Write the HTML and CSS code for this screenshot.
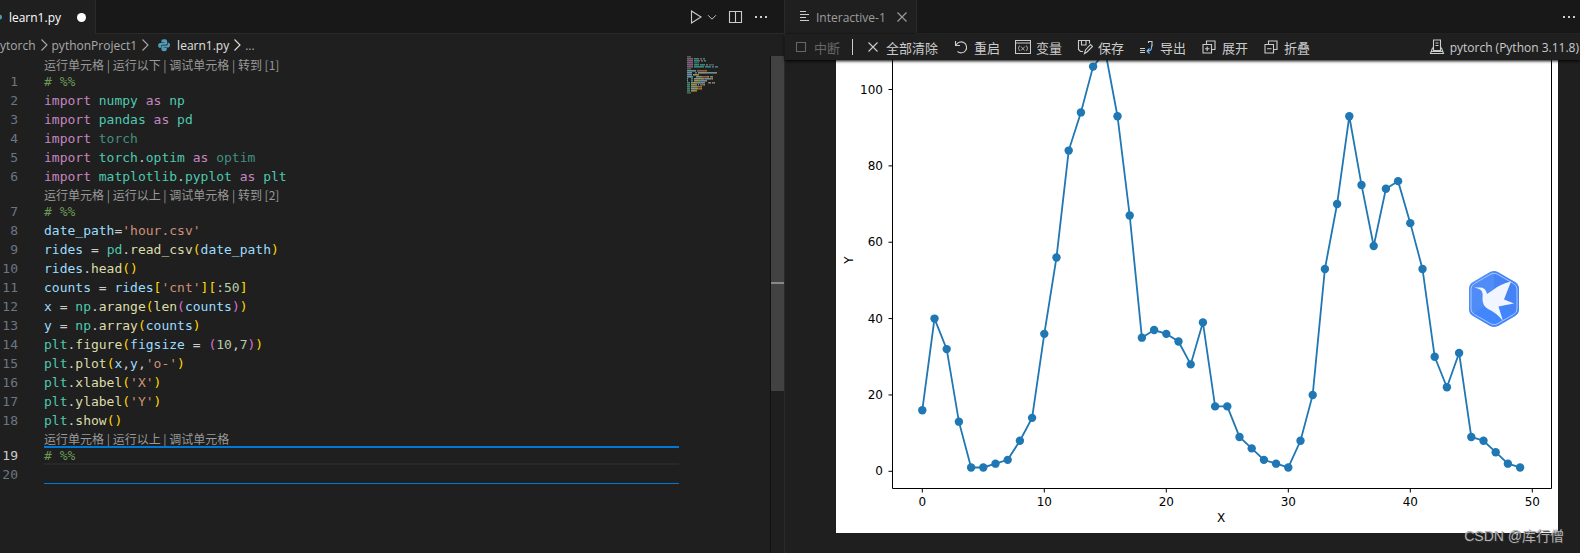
FILE: index.html
```html
<!DOCTYPE html>
<html lang="zh-CN">
<head>
    <meta charset="UTF-8">
    <meta name="viewport" content="width=device-width, initial-scale=1.0">
    <title>learn1.py</title>
    <link rel="stylesheet" href="styles.css">
</head>
<body>
    <svg class="defs" aria-hidden="true">
        <symbol id="python" viewBox="0 0 16 16">
            <path d="M8 1.5c-2.6 0-3 1-3 2.2V5h3.4v.7H3.4C2 5.700 1.300 7 1.300 8.500S2 11.200 3.300 11.200H4.600V9.500C4.600 8.300 5.600 7.600 6.600 7.600H10C11 7.600 11.600 6.800 11.600 6V3.700C11.600 2.200 10.200 1.500 8 1.500z"/>
            <path d="M8.200 15c2.600 0 3-1 3-2.200v-1.300H7.800v-.7h5c1.400 0 2-1.200 2-2.700S14.200 5.300 12.900 5.300H12.200V6.800C12.200 8 11.200 8.500 10.200 8.500H6.600C5.600 8.500 5 9.300 5 10.200v2.600c0 1.500 1.200 2.200 3.200 2.200z"/>
        </symbol>
        <symbol id="chevron" viewBox="0 0 16 16">
            <path d="M5.500 2.500L11 8L5.500 13.500"/>
        </symbol>
        <symbol id="more" viewBox="0 0 16 16">
            <path d="M2 7h2v2H2zM7 7h2v2H7zM12 7h2v2h-2z" fill="currentColor" stroke="none"/>
        </symbol>
        <symbol id="close" viewBox="0 0 16 16">
            <path d="M3.500 3.500l9 9M12.500 3.500l-9 9"/>
        </symbol>
    </svg>

    <main class="workbench">
        <section class="group">
            <div class="tabs">
                <div class="tab tab-file">
                    <svg class="icon py"><use href="#python"/></svg>
                    <span>learn1.py</span>
                    <span class="dirty"></span>
                </div>
                <div class="actions">
                    <button class="icon-btn run" aria-label="运行">
                        <svg class="icon" viewBox="0 0 16 16"><path d="M3.500 2L13 8L3.500 14z"/></svg>
                    </button>
                    <button class="icon-btn drop" aria-label="运行选项">
                        <svg class="icon" viewBox="0 0 16 16"><path d="M3.500 6L8 10.500L12.500 6"/></svg>
                    </button>
                    <button class="icon-btn split" aria-label="拆分">
                        <svg class="icon" viewBox="0 0 16 16"><path d="M1.500 2.500h12v11H1.500zM7.500 2.500v11"/></svg>
                    </button>
                    <button class="icon-btn" aria-label="更多">
                        <svg class="icon"><use href="#more"/></svg>
                    </button>
                </div>
            </div>
            <nav class="breadcrumbs">
                <a href="#">ytorch</a>
                <svg class="icon sep"><use href="#chevron"/></svg>
                <a href="#">pythonProject1</a>
                <svg class="icon sep"><use href="#chevron"/></svg>
                <svg class="icon py"><use href="#python"/></svg>
                <a href="#" class="active">learn1.py</a>
                <svg class="icon sep active"><use href="#chevron"/></svg>
                <a href="#">...</a>
            </nav>
            <div class="editor">
                <div class="code">
                    <div class="lens"><a href="#">运行单元格</a> | <a href="#">运行以下</a> | <a href="#">调试单元格</a> | <a href="#">转到 [1]</a></div>
                    <div class="line"><span class="num">1</span><code><i class="c"># %%</i></code></div>
                    <div class="line"><span class="num">2</span><code><i class="k">import</i> <i class="m">numpy</i> <i class="k">as</i> <i class="m">np</i></code></div>
                    <div class="line"><span class="num">3</span><code><i class="k">import</i> <i class="m">pandas</i> <i class="k">as</i> <i class="m">pd</i></code></div>
                    <div class="line"><span class="num">4</span><code><i class="k">import</i> <i class="m unused">torch</i></code></div>
                    <div class="line"><span class="num">5</span><code><i class="k">import</i> <i class="m">torch</i>.<i class="m">optim</i> <i class="k">as</i> <i class="m unused">optim</i></code></div>
                    <div class="line"><span class="num">6</span><code><i class="k">import</i> <i class="m">matplotlib</i>.<i class="m">pyplot</i> <i class="k">as</i> <i class="m">plt</i></code></div>
                    <div class="lens"><a href="#">运行单元格</a> | <a href="#">运行以上</a> | <a href="#">调试单元格</a> | <a href="#">转到 [2]</a></div>
                    <div class="line"><span class="num">7</span><code><i class="c"># %%</i></code></div>
                    <div class="line"><span class="num">8</span><code><i class="v">date_path</i>=<i class="s">'hour.csv'</i></code></div>
                    <div class="line"><span class="num">9</span><code><i class="v">rides</i> = <i class="m">pd</i>.<i class="f">read_csv</i><i class="b1">(</i><i class="v">date_path</i><i class="b1">)</i></code></div>
                    <div class="line"><span class="num">10</span><code><i class="v">rides</i>.<i class="f">head</i><i class="b1">()</i></code></div>
                    <div class="line"><span class="num">11</span><code><i class="v">counts</i> = <i class="v">rides</i><i class="b1">[</i><i class="s">'cnt'</i><i class="b1">][</i>:<i class="n">50</i><i class="b1">]</i></code></div>
                    <div class="line"><span class="num">12</span><code><i class="v">x</i> = <i class="m">np</i>.<i class="f">arange</i><i class="b1">(</i><i class="f">len</i><i class="b2">(</i><i class="v">counts</i><i class="b2">)</i><i class="b1">)</i></code></div>
                    <div class="line"><span class="num">13</span><code><i class="v">y</i> = <i class="m">np</i>.<i class="f">array</i><i class="b1">(</i><i class="v">counts</i><i class="b1">)</i></code></div>
                    <div class="line"><span class="num">14</span><code><i class="m">plt</i>.<i class="f">figure</i><i class="b1">(</i><i class="v">figsize</i> = <i class="b2">(</i><i class="n">10</i>,<i class="n">7</i><i class="b2">)</i><i class="b1">)</i></code></div>
                    <div class="line"><span class="num">15</span><code><i class="m">plt</i>.<i class="f">plot</i><i class="b1">(</i><i class="v">x</i>,<i class="v">y</i>,<i class="s">'o-'</i><i class="b1">)</i></code></div>
                    <div class="line"><span class="num">16</span><code><i class="m">plt</i>.<i class="f">xlabel</i><i class="b1">(</i><i class="s">'X'</i><i class="b1">)</i></code></div>
                    <div class="line"><span class="num">17</span><code><i class="m">plt</i>.<i class="f">ylabel</i><i class="b1">(</i><i class="s">'Y'</i><i class="b1">)</i></code></div>
                    <div class="line"><span class="num">18</span><code><i class="m">plt</i>.<i class="f">show</i><i class="b1">()</i></code></div>
                    <div class="lens"><a href="#">运行单元格</a> | <a href="#">运行以上</a> | <a href="#">调试单元格</a></div>
                    <div class="line current"><span class="num">19</span><code class="cell-top"><i class="c"># %%</i></code></div>
                    <div class="line"><span class="num">20</span><code class="cell-bottom"></code></div>
                </div>
                <svg class="minimap" viewBox="0 0 83 38" aria-hidden="true"></svg>
                <div class="scrollbar"><div class="slider"><div class="mark"></div></div></div>
            </div>
        </section>

        <section class="group">
            <div class="tabs">
                <div class="tab tab-interactive">
                    <svg class="icon lines" viewBox="0 0 16 16"><path d="M4 2.500h6M4 5.500h9M4 8.500h6M4 11.500h9"/></svg>
                    <span>Interactive-1</span>
                    <button class="icon-btn" aria-label="关闭"><svg class="icon"><use href="#close"/></svg></button>
                </div>
                <div class="actions actions-right">
                    <button class="icon-btn" aria-label="更多"><svg class="icon"><use href="#more"/></svg></button>
                </div>
            </div>
            <div class="toolbar">
                <button class="tool" disabled>
                    <svg class="icon" viewBox="0 0 16 16"><path d="M3.500 3.500h9v9h-9z"/></svg>中断
                </button>
                <span class="divider"></span>
                <button class="tool"><svg class="icon"><use href="#close"/></svg>全部清除</button>
                <button class="tool">
                    <svg class="icon" viewBox="0 0 16 16"><path d="M2.500 2v4.500H7M3 6.300A5.500 5.500 0 1 1 4.500 12.500"/></svg>重启
                </button>
                <button class="tool">
                    <svg class="icon" viewBox="0 0 16 16"><path d="M.500 1.500h15v13H.500zM.500 4h15"/><path class="thin" d="M4.500 6.500q-2 2.800 0 5.500M11.500 6.500q2 2.800 0 5.500M6 7.500l3.500 4M10 7.500l-4 4"/></svg>变量
                </button>
                <button class="tool">
                    <svg class="icon" viewBox="0 0 16 16"><path d="M6 12.500H3.500l-2-2v-9h11v3M4.500 1.500v4.500h4.500v-4.500M7.500 14.500l1-3.500l5-5.500l2 2l-5.500 5.500z"/></svg>保存
                </button>
                <button class="tool">
                    <svg class="icon" viewBox="0 0 16 16"><path d="M1 9.500h5M1 11.500h5M1 13.500h5M9.500 4V2.500h3.500v5"/><path class="blue" d="M12.500 6.500v2q0 3.500-3.500 3.500M10.500 9.500L8 12l2.500 2.500"/></svg>导出
                </button>
                <button class="tool">
                    <svg class="icon" viewBox="0 0 16 16"><path d="M2 5.500h8.500v8.500H2zM5.500 5.500v-3.500H14v8.500h-3.500M6.200 7.500v4.500M4 9.700h4.500"/></svg>展开
                </button>
                <button class="tool">
                    <svg class="icon" viewBox="0 0 16 16"><path d="M2 5.500h8.500v8.500H2zM5.500 5.500v-3.500H14v8.500h-3.500M4 9.700h4.500"/></svg>折叠
                </button>
                <button class="tool kernel">
                    <svg class="icon" viewBox="0 0 16 16"><path d="M4.500 1h7v10.500h-7zM6.500 4h3M6.500 6.500h3M4.500 9h-1l-2 5.500h13l-2-5.500h-1M2.500 12.500h11"/></svg>pytorch (Python 3.11.8)
                </button>
            </div>
            <div class="output">
                <svg class="plot" viewBox="0 0 722 473" role="img" aria-label="Y / X">
                    <path class="axis" d="M56.500 0V428.500H715.500V0"/>
                    <g class="ticks"></g>
                    <text x="385" y="462" text-anchor="middle">X</text>
                    <text transform="translate(17 200) rotate(-90)" text-anchor="middle">Y</text>
                    <polyline class="series"/>
                    <g class="points"></g>
                </svg>
                <div class="badge">
                    <svg viewBox="0 0 52 58" aria-hidden="true">
                        <path d="M22 2Q26 0 30 2L47 12Q51 14.500 51 18.500V39.500Q51 43.500 47 46L30 56Q26 58 22 56L5 46Q1 43.500 1 39.500V18.500Q1 14.500 5 12z" fill="#4f8cf8"/>
                        <path d="M26 29V1L47 12L51 18V40L47 46z" fill="#3d7cf5" opacity=".6"/>
                        <path d="M26 29L4 45L23 56H30L47 46z" fill="#3c83ff" opacity=".7"/>
                        <path d="M23 4Q26 2.500 29 4L45.500 13.500Q49 15.500 49 19V39Q49 42.500 45.500 44.500L29 54Q26 55.500 23 54L6.500 44.500Q3 42.500 3 39V19Q3 15.500 6.500 13.500z" fill="none" stroke="#a9c8ff"/>
                        <path d="M6 17Q9 17.500 12 17.500Q17 17.500 18.500 22.500L19 24L25 20Q32 14 43 11.500L39.500 20.500L36 29.500L46 33.500L38 35L30.500 36.500L35 51Q29 43 20 39Q14.500 36 14.500 29Q15.500 21 12 19.500Q10 18.500 6 17z" fill="#f0f5ff"/>
                    </svg>
                </div>
                <div class="watermark">CSDN @库行僧</div>
            </div>
        </section>
    </main>

    <script>
        const counts = [16, 40, 32, 13, 1, 1, 2, 3, 8, 14, 36, 56, 84, 94, 106, 110, 93,
            67, 35, 37, 36, 34, 28, 39, 17, 17, 9, 6, 3, 2, 1, 8, 20, 53, 70, 93, 75,
            59, 74, 76, 65, 53, 30, 22, 31, 9, 8, 5, 2, 1];
        const px = x => 86.3 + x * 12.2;
        const py = y => 411.3 - y * 3.818;

        document.querySelector('.series').setAttribute('points',
            counts.map((c, i) => `${px(i)},${py(c)}`).join(' '));
        document.querySelector('.points').innerHTML =
            counts.map((c, i) => `<circle cx="${px(i)}" cy="${py(c)}" r="4.2"/>`).join('');

        let ticks = '';
        for (let x = 0; x <= 50; x += 10) {
            ticks += `<path class="axis" d="M${px(x)} 428.5v4"/><text x="${px(x)}" y="446" text-anchor="middle">${x}</text>`;
        }
        for (let y = 0; y <= 100; y += 20) {
            ticks += `<path class="axis" d="M56.5 ${py(y)}h-4"/><text x="47" y="${py(y) + 4}" text-anchor="end">${y}</text>`;
        }
        document.querySelector('.ticks').innerHTML = ticks;

        // minimap: one small block per token
        let map = '';
        let row = 0;
        document.querySelectorAll('.code code').forEach(code => {
            let col = 0;
            code.childNodes.forEach(node => {
                const n = node.textContent.length;
                if (node.nodeType === 1) {
                    map += `<rect x="${col}" y="${row * 2}" width="${n}" height="1.6" fill="${getComputedStyle(node).color}"/>`;
                }
                col += n;
            });
            row++;
        });
        document.querySelector('.minimap').innerHTML = map;
    </script>
</body>
</html>
```

FILE: styles.css
```css
body, html {
    margin: 0;
    height: 100%;
    background-color: #1f1f1f;
    color: #cccccc;
    font-family: "Open Sans", "Noto Sans CJK SC", sans-serif;
    font-size: 13px;
    overflow: hidden;
}
a {
    color: inherit;
    text-decoration: none;
}
button {
    display: flex;
    align-items: center;
    padding: 0;
    border: 0;
    background: none;
    color: inherit;
    font: inherit;
    white-space: nowrap;
}
.defs {
    position: absolute;
    width: 0;
    height: 0;
}
.icon {
    flex: none;
    width: 16px;
    height: 16px;
    fill: none;
    stroke: currentColor;
    stroke-width: 1.1;
}
.icon .thin {
    stroke-width: 0.8;
}
.icon .blue {
    stroke: #75beff;
}
.py {
    width: 14px;
    height: 14px;
    fill: #519aba;
    stroke: none;
}
.workbench {
    display: grid;
    grid-template-columns: minmax(0, 785fr) minmax(0, 795fr);
    height: 100%;
}
.group {
    display: flex;
    flex-direction: column;
    min-width: 0;
    min-height: 0;
}
.group:first-child {
    border-right: 1px solid #2b2b2b;
}

/* tabs */
.tabs {
    display: flex;
    flex: none;
    height: 34px;
    background: #181818;
}
.tab {
    display: flex;
    align-items: center;
    box-sizing: border-box;
    border-right: 1px solid #2b2b2b;
    background: #1f1f1f;
    font-size: 12px;
}
.tab-file {
    width: 96px;
    padding-right: 9px;
    color: #ffffff;
    justify-content: flex-end;
}
.tab-file .py {
    margin-right: 6px;
}
.dirty {
    flex: none;
    width: 9px;
    height: 9px;
    margin-left: 16px;
    border-radius: 50%;
    background: #ffffff;
}
.tab-interactive {
    gap: 4px;
    padding: 0 6px 0 11px;
    color: #9d9d9d;
}
.lines {
    color: #cccccc;
}
.tab-interactive .icon-btn {
    margin-left: 4px;
}
.actions {
    display: flex;
    flex: 1;
    align-items: center;
    justify-content: flex-end;
    padding-right: 15px;
    border-bottom: 1px solid #2b2b2b;
}
.actions-right {
    padding-right: 3px;
}
.drop .icon {
    width: 14px;
    height: 14px;
}
.drop {
    margin: 0 9px 0 1px;
}
.split {
    margin-right: 9px;
}

/* breadcrumbs */
.breadcrumbs {
    display: flex;
    flex: none;
    align-items: center;
    height: 22px;
    color: #a9a9a9;
    font-size: 12px;
}
.breadcrumbs .active {
    color: #e0e0e0;
}
.breadcrumbs .py {
    margin: 0 6px 0 4px;
}

/* editor */
.editor {
    display: flex;
    flex: 1;
    min-height: 0;
}
.code {
    flex: 1;
    min-width: 0;
    margin-right: 8px;
}
.lens {
    height: 16px;
    padding-left: 44px;
    color: #999999;
    font-family: "Noto Sans CJK SC", sans-serif;
    font-size: 12px;
    line-height: 18px;
    white-space: pre;
}
.line {
    display: flex;
    height: 19px;
    font-family: "DejaVu Sans Mono", monospace;
    font-size: 13px;
    line-height: 19px;
}
.num {
    width: 18px;
    margin-right: 26px;
    color: #6e7681;
    text-align: right;
}
.current .num {
    color: #cccccc;
}
code {
    flex: 1;
    box-sizing: border-box;
    color: #cccccc;
    font: inherit;
    white-space: pre;
}
code i {
    font-style: normal;
}
.cell-top {
    border-top: 2px solid #0078d4;
    border-bottom: 2px solid #282828;
    line-height: 16px;
}
.cell-bottom {
    border-bottom: 1px solid #0078d4;
}
.c { color: #6a9955; }
.k { color: #c586c0; }
.m { color: #4ec9b0; }
.v { color: #9cdcfe; }
.f { color: #dcdcaa; }
.s { color: #ce9178; }
.n { color: #b5cea8; }
.b1 { color: #ffd700; }
.b2 { color: #da70d6; }
.unused { color: #41907f; }
.minimap {
    flex: none;
    width: 83px;
    height: 38px;
    opacity: 0.6;
}
.scrollbar {
    flex: none;
    width: 13px;
    border-left: 1px solid #101010;
}
.slider {
    height: 335px;
    background: #424242;
}
.mark {
    width: 13px;
    height: 226px;
    border-bottom: 2px solid #888888;
}

/* interactive window */
.toolbar {
    position: relative;
    z-index: 1;
    display: flex;
    flex: none;
    align-items: center;
    gap: 15px;
    height: 26px;
    padding: 0 1px 0 8px;
    background: #1f1f1f;
    box-shadow: 0 1px 3px #000000;
}
.tool {
    gap: 5px;
}
.tool:disabled {
    color: #666666;
}
.divider {
    width: 1px;
    height: 16px;
    margin: 0 -3px;
    background: #cccccc;
}
.kernel {
    margin-left: auto;
    font-size: 12px;
}
.output {
    position: relative;
    flex: 1;
    min-height: 0;
    padding: 0 22px 0 51px;
}
.plot {
    display: block;
    width: 100%;
    background: #ffffff;
    font-family: "DejaVu Sans", sans-serif;
    font-size: 12px;
}
.axis {
    fill: none;
    stroke: #000000;
}
.series {
    fill: none;
    stroke: #1f77b4;
    stroke-width: 1.8;
}
.points {
    fill: #1f77b4;
}
.badge {
    position: absolute;
    top: 210px;
    right: 60px;
    width: 52px;
}
.badge svg {
    display: block;
}
.watermark {
    position: absolute;
    right: 16px;
    bottom: 8px;
    color: #b4b4b4;
    font-family: "Liberation Sans", "Noto Sans CJK SC", sans-serif;
    font-size: 14px;
    text-shadow: 1px 1px 1px #333333;
}
```
